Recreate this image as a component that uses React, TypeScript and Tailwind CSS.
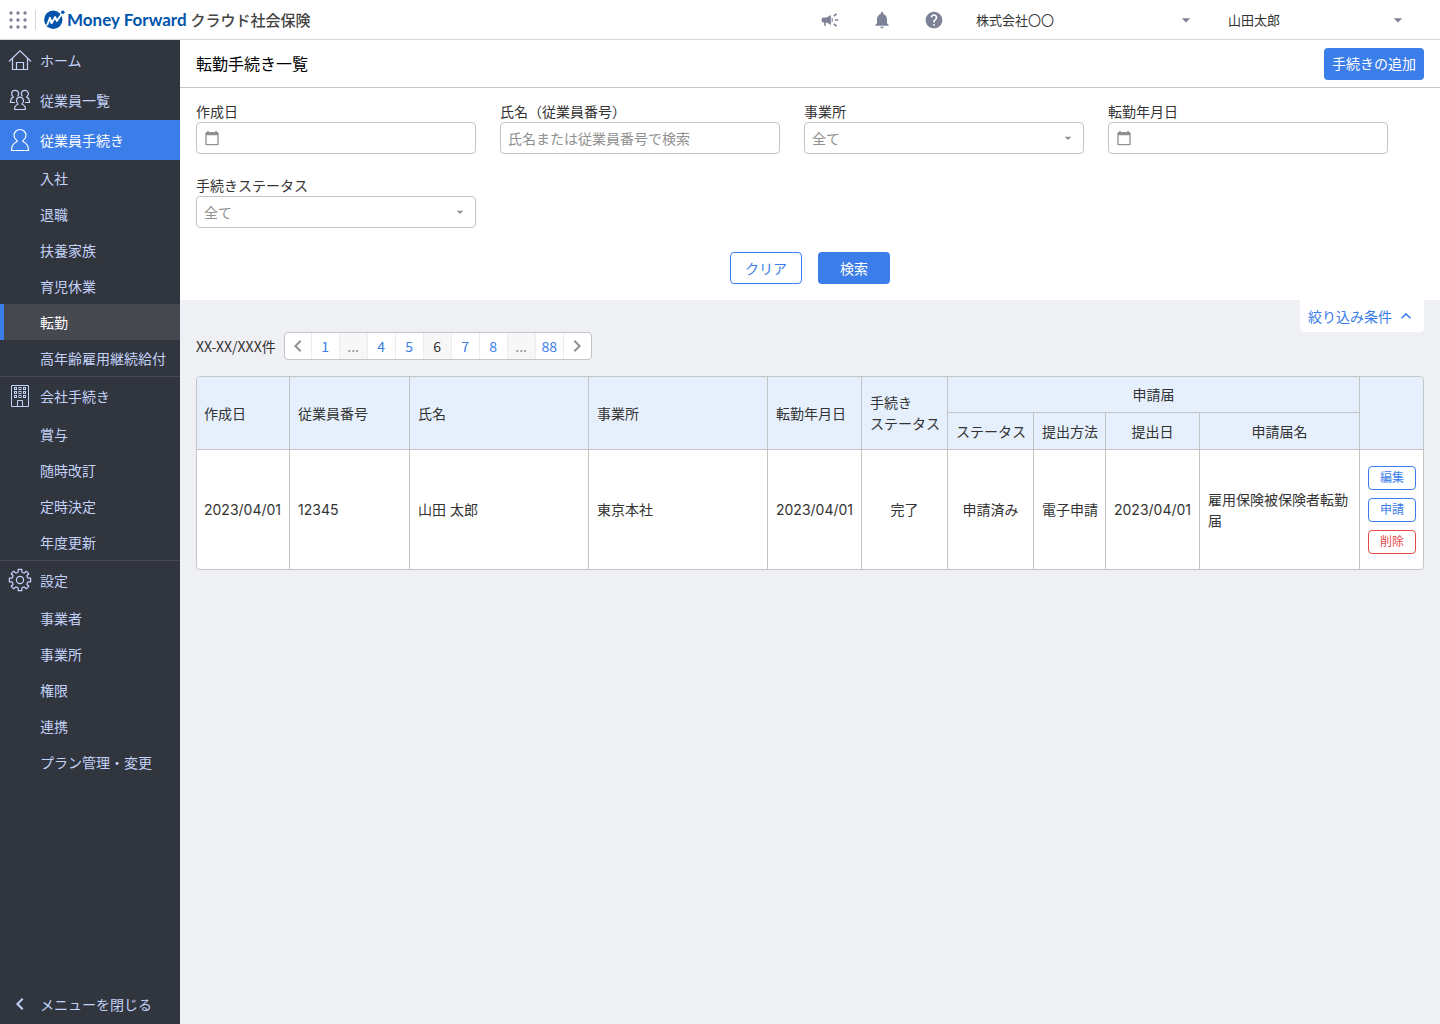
import React, { useState } from 'react';
import {
  MdArrowDropDown,
  MdCampaign,
  MdCalendarToday,
  MdHelp,
  MdKeyboardArrowLeft,
  MdKeyboardArrowRight,
  MdKeyboardArrowUp,
  MdNotifications,
} from 'react-icons/md';

type IconProps = { className?: string };

const HomeIcon = ({ className }: IconProps) => (
  <svg viewBox="0 0 24 24" className={className} fill="none" stroke="currentColor" strokeWidth="1.2">
    <path d="M1 13.5 12 2.9l11 10.6M4.500 10.500v11h15v-11M8.500 21.500v-7h7v7" />
  </svg>
);

const PersonIcon = ({ className }: IconProps) => (
  <svg viewBox="0 0 24 24" className={className} fill="none" stroke="currentColor" strokeWidth="1.2">
    <path d="M3.5 22.5h17c0-4.6-1.4-7-5.3-8.7-.5-.3-.5-.8 0-1.3 1.8-1.4 2.8-3 2.8-5 0-3.4-2.6-6-6-6s-6 2.6-6 6c0 2 1 3.6 2.8 5 .5.5.5 1 0 1.3-3.900 1.700-5.300 4.100-5.300 8.700z" />
  </svg>
);

const PeopleIcon = ({ className }: IconProps) => (
  <svg viewBox="0 0 24 24" className={className} fill="none" stroke="currentColor" strokeWidth="1.2">
    <path d="M6.500 21.500h11c0-2.800-1-4.200-3.300-5.200-.4-.2-.4-.6 0-.9.9-.8 1.300-1.600 1.300-2.700a3.500 3.500 0 0 0-7 0c0 1.100.4 1.900 1.300 2.700.4.3.4.7 0 .9-2.300 1-3.300 2.400-3.300 5.200z" />
    <path d="M7 14.500H2.500c0-2.800.6-4.300 2.500-5.200.4-.2.4-.6 0-.9C4.100 7.700 3.600 6.900 3.600 5.800a3.500 3.500 0 0 1 7 0c0 1-.3 1.800-1.100 2.500" />
    <path d="M17 14.500h4.500c0-2.800-.6-4.300-2.500-5.200-.4-.2-.4-.6 0-.9.9-.7 1.400-1.500 1.400-2.600a3.500 3.500 0 0 0-7 0c0 1 .3 1.800 1.100 2.500" />
  </svg>
);

const BuildingIcon = ({ className }: IconProps) => (
  <svg viewBox="0 0 24 24" className={className} fill="none" stroke="currentColor">
    <path d="M3.5 1.5h17v21h-17zM9.5 22.5v-6h5v6" />
    {[3.5, 7.5, 11.5].map((y) =>
      [6.5, 11, 15.5].map((x) => <rect key={`${x}-${y}`} x={x} y={y} width="2" height="2" />)
    )}
  </svg>
);

const gearPath = () => {
  const points: string[] = [];
  for (let i = 0; i < 8; i++) {
    const base = (i * Math.PI) / 4;
    [[-0.34, 7.9], [-0.22, 8.3], [-0.17, 10.8], [0.17, 10.8], [0.22, 8.3], [0.34, 7.9]].forEach(([a, r]) => {
      points.push(`${(12 + r * Math.sin(base + a)).toFixed(2)} ${(12 - r * Math.cos(base + a)).toFixed(2)}`);
    });
  }
  return `M${points.join('L')}Z`;
};

const GearIcon = ({ className }: IconProps) => (
  <svg viewBox="0 0 24 24" className={className} fill="none" stroke="currentColor" strokeWidth="1.2" strokeLinejoin="round">
    <path d={gearPath()} />
    <circle cx="12" cy="12" r="3.6" />
  </svg>
);

const AppsIcon = () => (
  <svg viewBox="0 0 20 20" className="size-5" fill="#7d8296">
    {[3, 10, 17].map((y) => [3, 10, 17].map((x) => <circle key={`${x}-${y}`} cx={x} cy={y} r="1.7" />))}
  </svg>
);

const LogoMark = () => (
  <svg viewBox="0 0 22 20" className="h-5 w-[22px] shrink-0">
    <circle cx="9.3" cy="9.7" r="9.2" fill="#0054ac" />
    <path d="M3 15.500 6 7.800l1.500 5.400 3.700-6.200 1.600 4L18 3.500" fill="none" stroke="#fff" strokeWidth="1.9" strokeLinejoin="round" />
    <circle cx="18.8" cy="2.4" r="2.7" fill="#fff" />
    <circle cx="18.8" cy="2.2" r="1.8" fill="#0054ac" />
  </svg>
);

const MENU = [
  { label: 'ホーム', icon: HomeIcon, children: [] },
  { label: '従業員一覧', icon: PeopleIcon, children: [] },
  {
    label: '従業員手続き',
    icon: PersonIcon,
    active: true,
    children: ['入社', '退職', '扶養家族', '育児休業', '転勤', '高年齢雇用継続給付'],
  },
  { label: '会社手続き', icon: BuildingIcon, divider: true, children: ['賞与', '随時改訂', '定時決定', '年度更新'] },
  { label: '設定', icon: GearIcon, divider: true, children: ['事業者', '事業所', '権限', '連携', 'プラン管理・変更'] },
];

const PAGES = ['1', '...', '4', '5', '6', '7', '8', '...', '88'];

const Header = () => (
  <header className="flex h-10 shrink-0 items-center border-b border-[#d3d5d6] bg-white">
    <button type="button" aria-label="サービス一覧" className="ml-2">
      <AppsIcon />
    </button>
    <span className="ml-[7px] h-5 w-px bg-[#d3d5d6]" />
    <a href="#" className="ml-2 flex items-center whitespace-nowrap">
      <LogoMark />
      <span className="ml-px font-['Lato'] text-[17px] font-bold text-[#0054ac]">Money Forward</span>
      <span className="ml-1 text-[15px] font-medium leading-5 text-[#444]">クラウド社会保険</span>
    </a>
    <div className="ml-auto mr-4 flex items-center text-[#7d8296]">
      <button type="button" aria-label="お知らせ" className="px-4"><MdCampaign size={20} /></button>
      <button type="button" aria-label="通知" className="px-4"><MdNotifications size={20} /></button>
      <button type="button" aria-label="ヘルプ" className="px-4"><MdHelp size={20} /></button>
      <button type="button" className="flex w-[252px] items-center justify-between px-4 text-[13px]">
        <span className="text-[#333]">株式会社〇〇</span>
        <MdArrowDropDown size={20} />
      </button>
      <button type="button" className="flex w-[212px] items-center justify-between px-4 text-[13px]">
        <span className="text-[#333]">山田太郎</span>
        <MdArrowDropDown size={20} />
      </button>
    </div>
  </header>
);

const Sidebar = () => (
  <nav className="flex w-[180px] shrink-0 flex-col bg-[#31353e] text-[#c3d2f8]">
    {MENU.map(({ label, icon: Icon, active, divider, children }) => (
      <div key={label}>
        <a
          href="#"
          className={`flex h-10 items-center gap-2 px-2 ${active ? 'bg-[#3b7de9] text-white' : ''} ${divider ? 'shadow-[inset_0_1px_#484b53]' : ''}`}
        >
          <Icon className="size-6" />
          {label}
        </a>
        {children.map((child) => (
          <a
            key={child}
            href="#"
            className={`flex h-9 items-center whitespace-nowrap border-l-4 pl-9 ${child === '転勤' ? 'border-[#3b7de9] bg-[#45484f] text-white' : 'border-transparent'}`}
          >
            {child}
          </a>
        ))}
      </div>
    ))}
    <button type="button" className="mt-auto flex h-10 items-center gap-2 px-2">
      <MdKeyboardArrowLeft size={24} />
      メニューを閉じる
    </button>
  </nav>
);

const Field = ({ id, label, children }: { id: string; label: string; children: React.ReactNode }) => (
  <div className="w-[280px]">
    <label htmlFor={id} className="block">{label}</label>
    {children}
  </div>
);

const DateInput = ({ id }: { id: string }) => (
  <div className="flex h-8 items-center gap-2 rounded border border-[#c4c4c4] bg-white px-[7px]">
    <MdCalendarToday size={16} className="text-[#919191]" />
    <input id={id} type="text" className="min-w-0 flex-1 outline-none" />
  </div>
);

const SelectBox = ({ id }: { id: string }) => (
  <div className="relative">
    <select id={id} className="h-8 w-full appearance-none rounded border border-[#c4c4c4] bg-white px-[7px] text-[#919191]">
      <option>全て</option>
    </select>
    <MdArrowDropDown size={16} className="pointer-events-none absolute right-2 top-2 text-[#919191]" />
  </div>
);

const Filters = () => (
  <form className="bg-white px-4 pb-4 pt-[13px]" onSubmit={(e) => e.preventDefault()}>
    <div className="flex flex-wrap gap-x-6 gap-y-[21px]">
      <Field id="created" label="作成日"><DateInput id="created" /></Field>
      <Field id="name" label="氏名（従業員番号）">
        <input
          id="name"
          type="text"
          placeholder="氏名または従業員番号で検索"
          className="h-8 w-full rounded border border-[#c4c4c4] px-[7px] placeholder:text-[#919191]"
        />
      </Field>
      <Field id="office" label="事業所"><SelectBox id="office" /></Field>
      <Field id="transferred" label="転勤年月日"><DateInput id="transferred" /></Field>
      <Field id="status" label="手続きステータス"><SelectBox id="status" /></Field>
    </div>
    <div className="mt-6 flex justify-center gap-4">
      <button type="reset" className="h-8 w-[72px] rounded border border-[#3b7de9] text-[#3b7de9]">クリア</button>
      <button type="submit" className="h-8 w-[72px] rounded bg-[#3b7de9] text-white">検索</button>
    </div>
  </form>
);

const Pagination = () => (
  <div className="flex items-center gap-2">
    <span>XX-XX/XXX件</span>
    <div className="flex h-7 overflow-hidden rounded border border-[#c4c4c4] bg-white text-[#3b7de9]">
      <button type="button" aria-label="前へ" className="flex w-[26px] items-center justify-center text-[#919191]">
        <MdKeyboardArrowLeft size={24} />
      </button>
      {PAGES.map((page, i) => {
        if (page === '...') {
          return <span key={i} className="flex w-7 items-center justify-center border-l border-[#ececec] bg-[#f7f7f7] text-[#919191]">...</span>;
        }
        return (
          <button key={i} type="button" className={`w-7 border-l border-[#ececec] ${page === '6' ? 'bg-[#f7f7f7] text-[#333]' : ''}`}>{page}</button>
        );
      })}
      <button type="button" aria-label="次へ" className="flex w-7 items-center justify-center border-l border-[#ececec] text-[#919191]">
        <MdKeyboardArrowRight size={24} />
      </button>
    </div>
  </div>
);

const ResultTable = () => (
  <div className="overflow-hidden rounded border border-[#c4c4c4] bg-white font-['Inter','Noto_Sans_CJK_JP',sans-serif]">
    <table className="w-full table-fixed border-separate border-spacing-0 [&_td]:border-r [&_td]:border-[#c4c4c4] [&_td]:px-2 [&_td:last-child]:border-r-0 [&_th]:border-b [&_th]:border-r [&_th]:border-[#c4c4c4] [&_th]:bg-[#e6f0fd] [&_th]:px-2 [&_th]:font-normal">
      <colgroup>
        <col className="w-[93px]" />
        <col className="w-[120px]" />
        <col />
        <col />
        <col className="w-[94px]" />
        <col className="w-[86px]" />
        <col className="w-[86px]" />
        <col className="w-[72px]" />
        <col className="w-[94px]" />
        <col className="w-[160px]" />
        <col className="w-[63px]" />
      </colgroup>
      <thead>
        <tr className="h-9 text-left">
          <th rowSpan={2} className="pl-[7px]!">作成日</th>
          <th rowSpan={2}>従業員番号</th>
          <th rowSpan={2}>氏名</th>
          <th rowSpan={2}>事業所</th>
          <th rowSpan={2} className="whitespace-nowrap">転勤年月日</th>
          <th rowSpan={2} className="whitespace-nowrap">手続き<br />ステータス</th>
          <th colSpan={4} className="text-center">申請届</th>
          <th rowSpan={2} aria-label="操作" className="border-r-0!" />
        </tr>
        <tr className="h-[37px] whitespace-nowrap text-center">
          <th>ステータス</th>
          <th>提出方法</th>
          <th>提出日</th>
          <th>申請届名</th>
        </tr>
      </thead>
      <tbody>
        <tr>
          <td className="pl-[7px]!">2023/04/01</td>
          <td>12345</td>
          <td>山田 太郎</td>
          <td>東京本社</td>
          <td>2023/04/01</td>
          <td className="text-center">完了</td>
          <td className="text-center">申請済み</td>
          <td className="whitespace-nowrap text-center">電子申請</td>
          <td>2023/04/01</td>
          <td>雇用保険被保険者転勤届</td>
          <td className="pb-[15px] pr-[7px]! pt-4">
            <div className="flex flex-col gap-2 text-xs text-[#3b7de9]">
              <button type="button" className="h-6 rounded border border-[#3b7de9]">編集</button>
              <button type="button" className="h-6 rounded border border-[#3b7de9]">申請</button>
              <button type="button" className="h-6 rounded border border-[#e5484d] text-[#e5484d]">削除</button>
            </div>
          </td>
        </tr>
      </tbody>
    </table>
  </div>
);

const App: React.FC = () => {
  const [filtersOpen, setFiltersOpen] = useState(true);

  return (
    <div className="flex min-h-screen flex-col font-['Noto_Sans_CJK_JP',sans-serif] text-sm leading-[21px] text-[#333]">
      <Header />
      <div className="flex flex-1">
        <Sidebar />
        <main className="min-w-0 flex-1 bg-[#eff0f4]">
          <div className="flex h-12 items-center justify-between border-b border-[#c4c4c4] bg-white px-4">
            <h1 className="text-base leading-[21px] text-black">転勤手続き一覧</h1>
            <button type="button" className="h-8 rounded bg-[#3b7de9] px-2 text-white">手続きの追加</button>
          </div>
          {filtersOpen && <Filters />}
          <div className="flex justify-end px-4">
            <button
              type="button"
              onClick={() => setFiltersOpen(!filtersOpen)}
              className="flex h-8 items-center gap-1 rounded-b bg-white px-2 text-[#3b7de9]"
            >
              絞り込み条件
              <MdKeyboardArrowUp size={20} className={filtersOpen ? '' : 'rotate-180'} />
            </button>
          </div>
          <div className="flex flex-col gap-4 px-4 pb-4">
            <Pagination />
            <ResultTable />
          </div>
        </main>
      </div>
    </div>
  );
};

export default App;
